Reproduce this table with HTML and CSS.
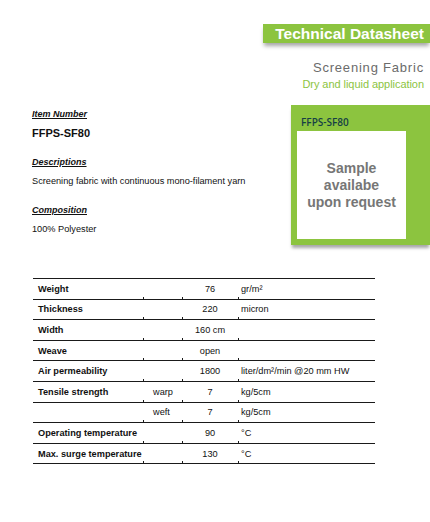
FILE: index.html
```html
<!DOCTYPE html>
<html>
<head>
<meta charset="utf-8">
<link rel="stylesheet" href="styles.css">
</head>
<body>
<div class="page">
  <header class="top">
    <div class="banner">Technical Datasheet</div>
    <div class="subtitle">Screening Fabric</div>
    <div class="tagline">Dry and liquid application</div>
  </header>

  <section class="intro">
    <div class="info">
      <div class="group">
        <div class="label">Item Number</div>
        <div class="value code">FFPS-SF80</div>
      </div>
      <div class="group">
        <div class="label">Descriptions</div>
        <div class="value">Screening fabric with continuous mono-filament yarn</div>
      </div>
      <div class="group">
        <div class="label">Composition</div>
        <div class="value">100% Polyester</div>
      </div>
    </div>
    <aside class="sample-card">
      <div class="card-code">FFPS-SF80</div>
      <div class="card-body">Sample<br>availabe<br>upon request</div>
    </aside>
  </section>

  <table class="specs">
    <colgroup>
      <col class="c-name"><col class="c-sub"><col class="c-val"><col class="c-unit">
    </colgroup>
    <tr><td class="name">Weight</td><td></td><td class="num">76</td><td class="unit">gr/m²</td></tr>
    <tr><td class="name">Thickness</td><td></td><td class="num">220</td><td class="unit">micron</td></tr>
    <tr><td class="name">Width</td><td></td><td class="num">160 cm</td><td class="unit"></td></tr>
    <tr><td class="name">Weave</td><td></td><td class="num">open</td><td class="unit"></td></tr>
    <tr><td class="name">Air permeability</td><td></td><td class="num">1800</td><td class="unit">liter/dm²/min @20 mm HW</td></tr>
    <tr><td class="name">Tensile strength</td><td class="sub">warp</td><td class="num">7</td><td class="unit">kg/5cm</td></tr>
    <tr><td class="name"></td><td class="sub">weft</td><td class="num">7</td><td class="unit">kg/5cm</td></tr>
    <tr><td class="name">Operating temperature</td><td></td><td class="num">90</td><td class="unit">°C</td></tr>
    <tr><td class="name">Max. surge temperature</td><td></td><td class="num">130</td><td class="unit">°C</td></tr>
  </table>
</div>
</body>
</html>
```
FILE: styles.css
```css
html, body {
  margin: 0;
  padding: 0;
  background: #fff;
}
body {
  font-family: "Liberation Sans", Arial, sans-serif;
  color: #111;
  width: 430px;
  height: 522px;
  overflow: hidden;
}
.page {
  padding: 24px 0 0 32px;
}

/* header */
.top {
  display: flex;
  flex-direction: column;
  align-items: flex-end;
}
.banner {
  width: 167px;
  box-sizing: border-box;
  height: 19px;
  line-height: 19px;
  background: #8cc43f;
  color: #fff;
  font-size: 15.5px;
  font-weight: bold;
  text-align: right;
  padding-right: 6px;
  box-shadow: 0 4px 4px -1px rgba(0, 0, 0, 0.35);
}
.subtitle {
  margin-top: 18px;
  padding-right: 6px;
  font-size: 13px;
  line-height: 14px;
  letter-spacing: 0.8px;
  color: #6b6b6b;
}
.tagline {
  margin-top: 2px;
  padding-right: 6px;
  font-size: 11px;
  line-height: 14px;
  letter-spacing: -0.05px;
  color: #8cc43f;
}

/* intro */
.intro {
  margin-top: 14px;
  display: flex;
  justify-content: space-between;
  align-items: flex-start;
}
.info {
  padding-top: 3px;
}
.group + .group {
  margin-top: 17px;
}
.label {
  font-size: 9px;
  line-height: 12px;
  font-weight: bold;
  font-style: italic;
  text-decoration: underline;
  text-underline-offset: 1px;
}
.value {
  margin-top: 7px;
  font-size: 9.2px;
  line-height: 12px;
}
.value.code {
  font-size: 11px;
  font-weight: bold;
}

.sample-card {
  width: 139px;
  height: 140px;
  box-sizing: border-box;
  background: #8cc43f;
  padding: 0 24px 6px 6px;
  display: flex;
  flex-direction: column;
  box-shadow: 0 4px 3px -1px rgba(0, 0, 0, 0.35);
}
.card-code {
  padding: 10px 0 0 4px;
  height: 26px;
  box-sizing: border-box;
  font-family: "Open Sans", sans-serif;
  font-size: 10px;
  line-height: 14px;
  font-weight: 600;
  color: #163f45;
}
.card-body {
  flex: 1;
  background: #fff;
  display: flex;
  align-items: center;
  justify-content: center;
  text-align: center;
  font-size: 14px;
  line-height: 17px;
  font-weight: bold;
  color: #767676;
}

/* table */
.specs {
  margin: 33px 0 0 1px;
  width: 342px;
  border-collapse: collapse;
  table-layout: fixed;
  font-size: 9.2px;
}
.c-name { width: 110px; }
.c-sub { width: 39px; }
.c-val { width: 56px; }
.c-unit { width: 137px; }
.specs tr {
  height: 20.6px;
}
.specs td {
  padding: 0;
  border-top: 1px solid #1a1a1a;
  border-bottom: 1px solid #1a1a1a;
  vertical-align: middle;
  white-space: nowrap;
}
.specs td + td {
  background: linear-gradient(#1a1a1a, #1a1a1a) left bottom / 1px 2px no-repeat;
}
.name {
  font-weight: bold;
  padding-left: 5px !important;
}
.sub {
  padding-left: 10px !important;
}
.num {
  text-align: center;
}
.unit {
  padding-left: 3px !important;
}
```
